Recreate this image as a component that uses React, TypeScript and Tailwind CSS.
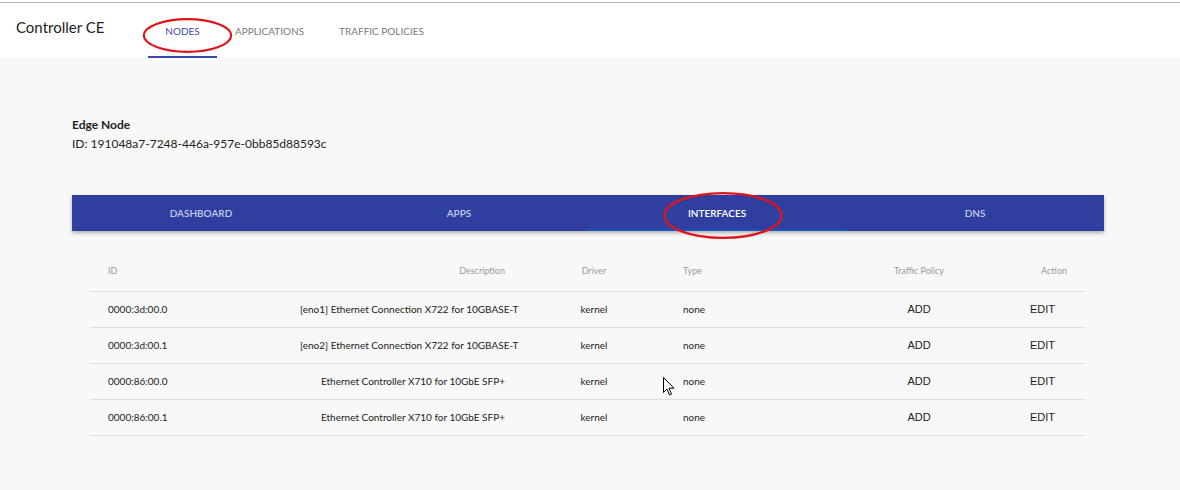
import { useState } from 'react';

const rows = [
  { id: '0000:3d:00.0', desc: '[eno1] Ethernet Connection X722 for 10GBASE-T', driver: 'kernel', type: 'none' },
  { id: '0000:3d:00.1', desc: '[eno2] Ethernet Connection X722 for 10GBASE-T', driver: 'kernel', type: 'none' },
  { id: '0000:86:00.0', desc: 'Ethernet Controller X710 for 10GbE SFP+', driver: 'kernel', type: 'none' },
  { id: '0000:86:00.1', desc: 'Ethernet Controller X710 for 10GbE SFP+', driver: 'kernel', type: 'none' },
];

const cols = 'grid grid-cols-[210px_223px_142px_206px_96px_118px]';

function RedCircle({ className }: { className: string }) {
  return (
    <svg className={`absolute pointer-events-none ${className}`} viewBox="0 0 100 50" preserveAspectRatio="none">
      <ellipse cx="50" cy="25" rx="48" ry="22" fill="none" stroke="#e0141b" strokeWidth="2.2" vectorEffect="non-scaling-stroke" />
    </svg>
  );
}

export default function App() {
  const [tab, setTab] = useState('INTERFACES');

  return (
    <div className="relative w-[1180px] h-[490px] bg-[#f8f8f8] font-['Lato',sans-serif] overflow-hidden">
      <div className="h-[2px] bg-white" />
      <div className="h-px bg-[#b4b4b4]" />
      <header className="h-[55px] bg-white flex items-start">
        <div className="pl-4 pt-[13px] text-[15px] text-[#222] w-[148px]">Controller CE</div>
        <nav className="flex h-full">
          {[
            { n: 'NODES', w: 'w-[69px]' },
            { n: 'APPLICATIONS', w: 'w-[105px]' },
            { n: 'TRAFFIC POLICIES', w: 'w-[119px]' },
          ].map(({ n, w }) => (
            <div
              key={n}
              className={`${w} h-full flex items-center justify-center text-[10px] ${
                n === 'NODES' ? 'text-[#3949ab] border-b-2 border-[#3949ab]' : 'text-[#7a7a7a] border-b-2 border-transparent'
              }`}
            >
              <span className="pt-[4px] whitespace-nowrap">{n}</span>
            </div>
          ))}
        </nav>
      </header>

      <div className="pl-[72px] pt-[59px]">
        <div className="text-[12px] font-bold text-[#222] leading-[16px]">Edge Node</div>
        <div className="text-[12px] text-[#222] leading-[16px] mt-[3px]">ID: 191048a7-7248-446a-957e-0bb85d88593c</div>
      </div>

      <div className="ml-[72px] mt-[43px] w-[1032px] h-[36px] bg-[#303f9f] shadow-[0_2px_4px_rgba(0,0,0,0.3)] flex">
        {['DASHBOARD', 'APPS', 'INTERFACES', 'DNS'].map(t => (
          <button
            key={t}
            onClick={() => setTab(t)}
            className={`w-[258px] h-full flex items-center justify-center text-[10px] font-semibold border-b-2 pt-[2px] ${
              tab === t ? 'text-white border-[#1a56b8]' : 'text-[#c5cae9] border-transparent'
            }`}
          >
            {t}
          </button>
        ))}
      </div>

      <div className="ml-[90px] mt-[19px] w-[995px]">
        <div className={`${cols} h-[42px] items-center text-[9px] text-[#9a9a9a] border-b border-[#dedede]`}>
          <div className="pl-[18px]">ID</div>
          <div className="text-right pr-[18px]">Description</div>
          <div className="text-center">Driver</div>
          <div className="pl-[18px]">Type</div>
          <div className="text-center">Traffic Policy</div>
          <div className="text-right pr-[18px]">Action</div>
        </div>
        {rows.map(r => (
          <div key={r.id} className={`${cols} h-[36px] items-center text-[10px] text-[#222] border-b border-[#dedede] whitespace-nowrap`}>
            <div className="pl-[18px]">{r.id}</div>
            <div className="text-right pr-[18px]">{r.desc}</div>
            <div className="text-center">{r.driver}</div>
            <div className="pl-[18px]">{r.type}</div>
            <div className="text-center font-['Liberation_Sans',sans-serif] text-[11px]">ADD</div>
            <div className="text-right pr-[30px] font-['Liberation_Sans',sans-serif] text-[11px]">EDIT</div>
          </div>
        ))}
      </div>

      <RedCircle className="left-[142px] top-[17px] w-[91px] h-[37px]" />
      <RedCircle className="left-[662px] top-[190px] w-[122px] h-[51px]" />

      <svg className="absolute left-[663px] top-[377px] w-[12px] h-[19px] pointer-events-none" viewBox="0 0 12 19">
        <path d="M0.5 0.5 L0.5 15.5 L4 12 L6.5 18 L8.5 17 L6 11.2 L11 11.2 Z" fill="#fff" stroke="#000" strokeWidth="1" strokeLinejoin="miter" />
      </svg>
    </div>
  );
}
